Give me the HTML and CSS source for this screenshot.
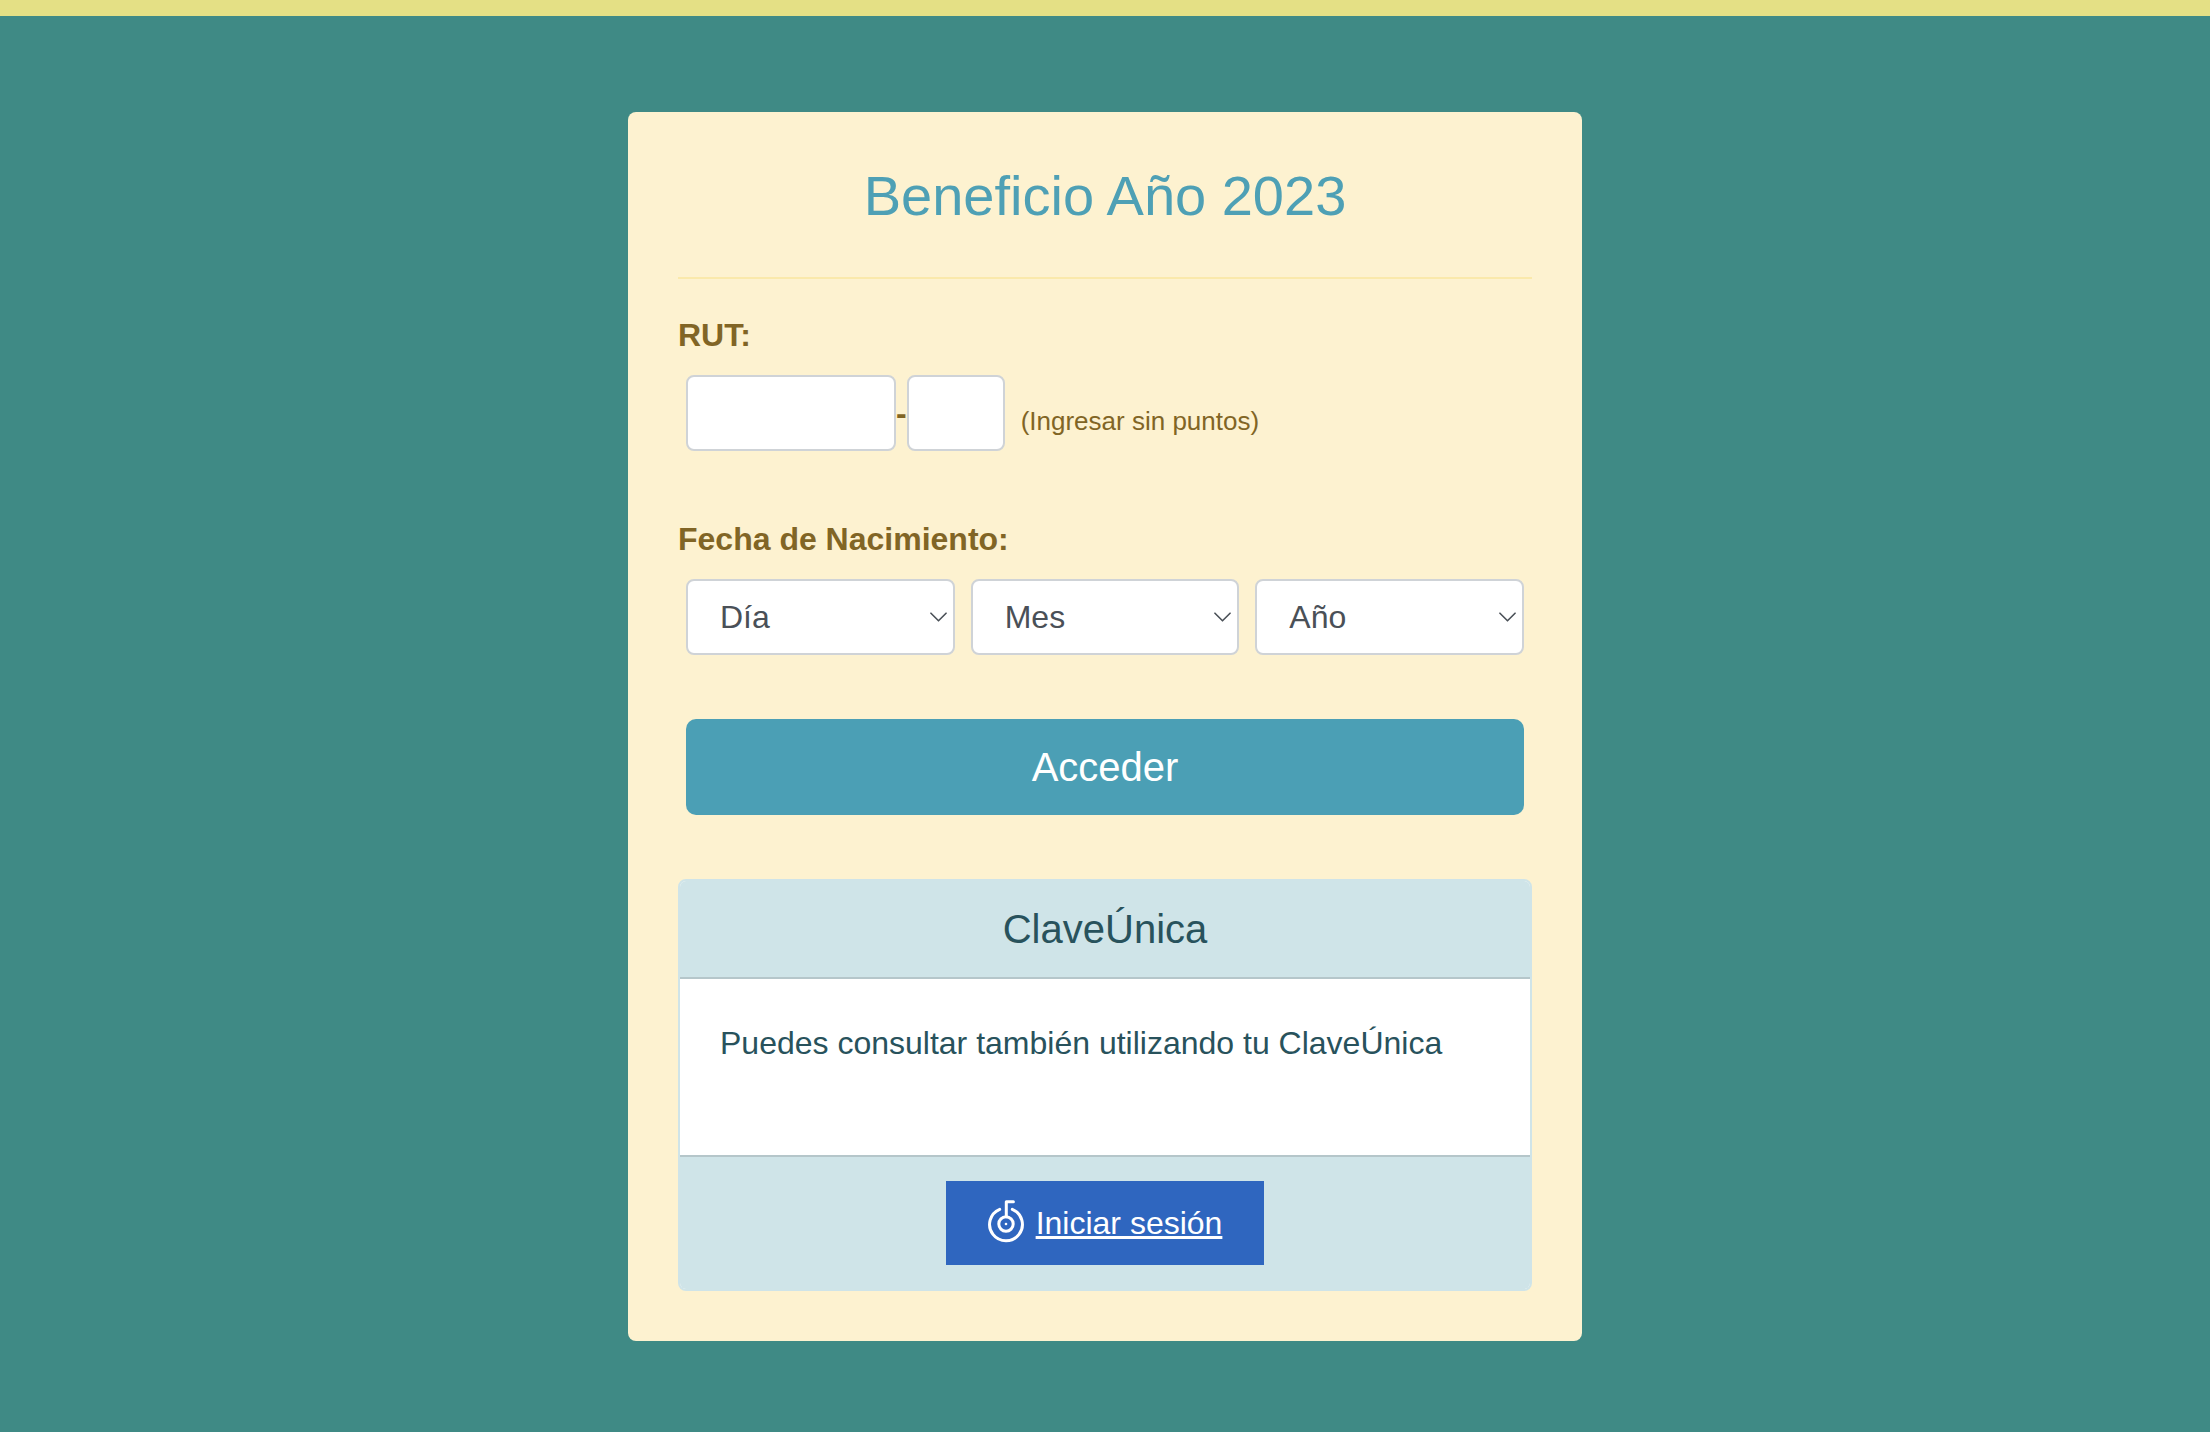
FILE: index.html
```html
<!DOCTYPE html>
<html lang="es">
<head>
  <meta charset="utf-8">
  <meta name="viewport" content="width=device-width, initial-scale=1">
  <title>Beneficio Año 2023</title>
  <link rel="stylesheet" href="styles.css">
</head>
<body>
  <main class="page">
    <section class="card">
      <h1 class="card-title">Beneficio Año 2023</h1>
      <hr class="divider">
      <form class="form">
        <div class="field">
          <label class="label" for="rut">RUT:</label>
          <div class="rut-row">
            <input class="control rut-number" id="rut" type="text" inputmode="numeric">
            <span class="dash">-</span>
            <input class="control rut-digit" id="dv" type="text" maxlength="1" aria-label="Dígito verificador">
            <span class="hint">(Ingresar sin puntos)</span>
          </div>
        </div>
        <div class="field">
          <label class="label" for="dia">Fecha de Nacimiento:</label>
          <div class="date-row">
            <div class="select-wrap">
              <select class="control select" id="dia"><option>Día</option></select>
              <svg class="chevron" viewBox="0 0 18 10" aria-hidden="true"><path d="M1 1l8 8 8-8"/></svg>
            </div>
            <div class="select-wrap">
              <select class="control select" id="mes" aria-label="Mes"><option>Mes</option></select>
              <svg class="chevron" viewBox="0 0 18 10" aria-hidden="true"><path d="M1 1l8 8 8-8"/></svg>
            </div>
            <div class="select-wrap">
              <select class="control select" id="anio" aria-label="Año"><option>Año</option></select>
              <svg class="chevron" viewBox="0 0 18 10" aria-hidden="true"><path d="M1 1l8 8 8-8"/></svg>
            </div>
          </div>
        </div>
        <button class="submit" type="button">Acceder</button>
      </form>
      <section class="panel">
        <h2 class="panel-header">ClaveÚnica</h2>
        <div class="panel-body">
          <p class="panel-text">Puedes consultar también utilizando tu ClaveÚnica</p>
        </div>
        <div class="panel-footer">
          <a class="login" href="#">
            <svg class="login-icon" viewBox="0 0 36 46" aria-hidden="true">
              <path d="M11.7 9.3A16.4 16.4 0 1 0 24.3 9.3"/>
              <circle cx="18" cy="24" r="7.2"/>
              <path d="M18.3 16.8V1.8H25.4"/>
              <circle class="login-dot" cx="18" cy="24" r="1.3"/>
            </svg>
            <span class="login-text">Iniciar sesión</span>
          </a>
        </div>
      </section>
    </section>
  </main>
</body>
</html>
```

FILE: styles.css
```css
*,
*::before,
*::after {
  box-sizing: border-box;
}

body {
  margin: 0;
  min-height: 100vh;
  border-top: 16px solid #e4e085;
  background: #3f8a85;
  font-family: "Liberation Sans", Helvetica, Arial, sans-serif;
  font-size: 32px;
  line-height: 48px;
  color: #816525;
}

.page {
  display: flex;
  justify-content: center;
  padding: 96px 24px 48px;
}

.card {
  width: 100%;
  max-width: 954px;
  padding: 50px;
  border-radius: 8px;
  background: #fdf2d0;
}

.card-title {
  margin: 0 0 48px;
  font-size: 56px;
  font-weight: 400;
  line-height: 67px;
  text-align: center;
  color: #4ea0b5;
}

.divider {
  height: 2px;
  margin: 0 0 32px;
  border: 0;
  background: #fae9ab;
}

.form {
  display: flex;
  flex-direction: column;
  gap: 64px;
  margin-bottom: 64px;
}

.field {
  display: flex;
  flex-direction: column;
  gap: 16px;
}

.label {
  font-weight: 700;
}

.rut-row,
.date-row {
  display: flex;
  align-items: center;
  padding: 0 8px;
}

.date-row {
  gap: 16px;
}

.control {
  height: 76px;
  padding: 0 32px;
  border: 2px solid #cfd3d7;
  border-radius: 8px;
  background: #fff;
  font: inherit;
  color: #4a5057;
}

.rut-number {
  width: 210px;
}

.rut-digit {
  width: 98px;
}

.dash {
  font-weight: 700;
}

.hint {
  padding: 16px 0 0 16px;
  font-size: 26px;
  line-height: 39px;
}

.select-wrap {
  position: relative;
  flex: 1;
}

.select {
  display: block;
  width: 100%;
  appearance: none;
}

.chevron {
  position: absolute;
  top: 33px;
  right: 8px;
  width: 17px;
  height: 10px;
  fill: none;
  stroke: #4a5057;
  stroke-width: 1.7;
  stroke-linecap: round;
  stroke-linejoin: round;
  pointer-events: none;
}

.submit {
  height: 96px;
  margin: 0 8px;
  padding: 0 32px;
  border: 0;
  border-radius: 10px;
  background: #4b9fb5;
  font: inherit;
  font-size: 40px;
  color: #fff;
}

.panel {
  overflow: hidden;
  border: 2px solid #cfe4e8;
  border-radius: 8px;
  background: #fff;
  color: #28525c;
}

.panel-header {
  margin: 0;
  padding: 24px;
  border-bottom: 2px solid #b5c6ca;
  background: #cfe4e8;
  font-size: 40px;
  font-weight: 400;
  text-align: center;
}

.panel-body {
  padding: 40px;
}

.panel-text {
  margin: 0 0 48px;
}

.panel-footer {
  display: flex;
  justify-content: center;
  padding: 24px;
  border-top: 2px solid #b5c6ca;
  background: #cfe4e8;
}

.login {
  display: flex;
  align-items: center;
  gap: 12px;
  padding: 18px 42px;
  background: #2f66bf;
  color: #fff;
  text-decoration: none;
}

.login-icon {
  width: 36px;
  height: 46px;
  fill: none;
  stroke: #fff;
  stroke-width: 3;
  stroke-linecap: round;
  stroke-linejoin: round;
}

.login-dot {
  fill: #fff;
  stroke: none;
}

.login-text {
  text-decoration: underline;
  text-decoration-thickness: 3px;
  text-underline-offset: 2px;
  text-decoration-skip-ink: none;
}
```
